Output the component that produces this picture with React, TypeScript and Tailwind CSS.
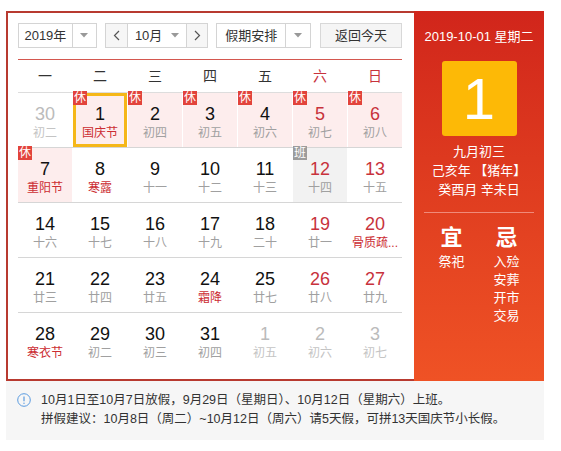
import React from "react";

type Day = {
  n: number;
  l: string;
  other?: boolean;
  red?: boolean;
  fest?: boolean;
  hol?: boolean;
  work?: boolean;
  sel?: boolean;
};

const rows: Day[][] = [
  [
    { n: 30, l: "初二", other: true },
    { n: 1, l: "国庆节", fest: true, hol: true, sel: true },
    { n: 2, l: "初四", hol: true },
    { n: 3, l: "初五", hol: true },
    { n: 4, l: "初六", hol: true },
    { n: 5, l: "初七", hol: true, red: true },
    { n: 6, l: "初八", hol: true, red: true },
  ],
  [
    { n: 7, l: "重阳节", fest: true, hol: true },
    { n: 8, l: "寒露", fest: true },
    { n: 9, l: "十一" },
    { n: 10, l: "十二" },
    { n: 11, l: "十三" },
    { n: 12, l: "十四", red: true, work: true },
    { n: 13, l: "十五", red: true },
  ],
  [
    { n: 14, l: "十六" },
    { n: 15, l: "十七" },
    { n: 16, l: "十八" },
    { n: 17, l: "十九" },
    { n: 18, l: "二十" },
    { n: 19, l: "廿一", red: true },
    { n: 20, l: "骨质疏...", red: true, fest: true },
  ],
  [
    { n: 21, l: "廿三" },
    { n: 22, l: "廿四" },
    { n: 23, l: "廿五" },
    { n: 24, l: "霜降", fest: true },
    { n: 25, l: "廿七" },
    { n: 26, l: "廿八", red: true },
    { n: 27, l: "廿九", red: true },
  ],
  [
    { n: 28, l: "寒衣节", fest: true },
    { n: 29, l: "初二" },
    { n: 30, l: "初三" },
    { n: 31, l: "初四" },
    { n: 1, l: "初五", other: true },
    { n: 2, l: "初六", other: true },
    { n: 3, l: "初七", other: true },
  ],
];

const weekdays = ["一", "二", "三", "四", "五", "六", "日"];

function Arrow() {
  return (
    <svg width="8" height="5" viewBox="0 0 8 5" className="block">
      <path d="M0 0 L8 0 L4 4.5 Z" fill="#999" />
    </svg>
  );
}

function Cell({ d }: { d: Day }) {
  const bg = d.hol ? "bg-[#fdeded]" : d.work ? "bg-[#f2f2f2]" : "bg-white";
  const numColor = d.other
    ? "text-[#bbbbbb]"
    : d.red
    ? "text-[#c8323c]"
    : "text-[#111111]";
  const lunColor = d.other
    ? "text-[#c4c4c4]"
    : d.fest
    ? "text-[#cc2d33]"
    : "text-[#a0a0a0]";
  return (
    <div className={`relative h-full ${bg}`}>
      <div
        className={`h-full flex flex-col items-center ${
          d.sel ? "border-[3px] border-[#f5b719] pt-[8px]" : "pt-[11px]"
        }`}
      >
        <div
          className={`text-[18px] leading-[20px] ${numColor}`}
          style={{ fontFamily: '"Liberation Sans", Arial, sans-serif' }}
        >
          {d.n}
        </div>
        <div className={`text-[12px] leading-[18px] whitespace-nowrap ${lunColor}`}>
          {d.l}
        </div>
      </div>
      {d.hol && (
        <div className="absolute left-0 top-[-2px] w-[14px] h-[14px] bg-[#e2433b] text-white text-[12px] leading-[14px] text-center">
          休
        </div>
      )}
      {d.work && (
        <div className="absolute left-0 top-[-2px] w-[14px] h-[14px] bg-[#9c9c9c] text-white text-[12px] leading-[14px] text-center">
          班
        </div>
      )}
    </div>
  );
}

export default function App() {
  return (
    <div
      className="w-[561px] h-[451px] bg-white pt-[11px] pl-[6px] text-[#333]"
      style={{ fontFamily: '"Liberation Sans", "Noto Sans CJK SC", sans-serif' }}
    >
      <div className="flex w-[538px] h-[370px]">
        {/* left calendar */}
        <div className="w-[408px] h-full border-l-2 border-t-2 border-b-2 border-[#b83a30] pl-[10px] pr-[12px] pt-[10px]">
          {/* controls */}
          <div className="flex items-center h-[25px] text-[13px] text-[#333]">
            <div className="flex h-[25px] w-[79px] border border-[#d4d4d4] bg-white">
              <div className="flex-1 flex items-center justify-center">2019年</div>
              <div className="w-[24px] border-l border-[#d4d4d4] flex items-center justify-center">
                <Arrow />
              </div>
            </div>
            <div className="flex h-[25px] w-[104px] ml-[8px] border border-[#d4d4d4] bg-white">
              <div className="w-[22px] bg-[#f6f6f6] border-r border-[#d4d4d4] flex items-center justify-center">
                <svg width="7" height="11" viewBox="0 0 7 11">
                  <path d="M6 1 L1.5 5.5 L6 10" stroke="#555" strokeWidth="1.2" fill="none" />
                </svg>
              </div>
              <div className="flex-1 flex items-center justify-center gap-[9px]">
                <span>10月</span>
                <Arrow />
              </div>
              <div className="w-[21px] bg-[#f6f6f6] border-l border-[#d4d4d4] flex items-center justify-center">
                <svg width="7" height="11" viewBox="0 0 7 11">
                  <path d="M1 1 L5.5 5.5 L1 10" stroke="#555" strokeWidth="1.2" fill="none" />
                </svg>
              </div>
            </div>
            <div className="flex h-[25px] w-[95px] ml-[8px] border border-[#d4d4d4] bg-white">
              <div className="flex-1 flex items-center justify-center">假期安排</div>
              <div className="w-[25px] border-l border-[#d4d4d4] flex items-center justify-center">
                <Arrow />
              </div>
            </div>
            <div className="flex h-[25px] w-[82px] ml-[9px] border border-[#d8d8d8] bg-[#f5f5f5] items-center justify-center">
              返回今天
            </div>
          </div>
          {/* red line */}
          <div className="mt-[11px] h-px bg-[#d4574f]" />
          {/* weekday header */}
          <div className="grid grid-cols-7 gap-x-px h-[33px] border-b border-[#dddddd] text-[14px] leading-[32px]">
            {weekdays.map((w, i) => (
              <div
                key={w}
                className={`text-center ${i >= 5 ? "text-[#c8323c]" : "text-[#333]"}`}
              >
                {w}
              </div>
            ))}
          </div>
          {/* rows */}
          {rows.map((r, ri) => (
            <div
              key={ri}
              className={`grid grid-cols-7 gap-x-px h-[55px] ${
                ri < rows.length - 1 ? "border-b border-[#d6d6d6]" : ""
              }`}
            >
              {r.map((d, di) => (
                <Cell key={di} d={d} />
              ))}
            </div>
          ))}
        </div>
        {/* right panel */}
        <div className="w-[130px] h-full bg-linear-to-b from-[#d1251b] to-[#ef5225] text-white flex flex-col items-center">
          <div className="mt-[17px] text-[13px] leading-[18px]">2019-10-01 星期二</div>
          <div
            className="mt-[15px] w-[75px] h-[75px] rounded-[3px] bg-[#fdb906] flex items-center justify-center text-[58px] leading-none"
            style={{ fontFamily: '"Liberation Sans", Arial, sans-serif' }}
          >
            1
          </div>
          <div className="mt-[6px] text-[13px] leading-[19px] text-center">
            <div>九月初三</div>
            <div>己亥年 【猪年】</div>
            <div>癸酉月 辛未日</div>
          </div>
          <div className="mt-[13px] w-[110px] h-px bg-[#f08a7a]" />
          <div className="mt-[12px] w-[110px] grid grid-cols-2">
            <div className="flex flex-col items-center">
              <div className="text-[22px] leading-[26px] font-bold">宜</div>
              <div className="mt-[2px] text-[13px] leading-[18px]">祭祀</div>
            </div>
            <div className="flex flex-col items-center">
              <div className="text-[22px] leading-[26px] font-bold">忌</div>
              <div className="mt-[2px] text-[13px] leading-[18px] text-center">
                <div>入殓</div>
                <div>安葬</div>
                <div>开市</div>
                <div>交易</div>
              </div>
            </div>
          </div>
        </div>
      </div>
      {/* note */}
      <div className="w-[538px] h-[59px] bg-[#f6f6f6] flex pt-[10px] pl-[11px] text-[12.5px] leading-[19px] text-[#333]">
        <svg width="14" height="14" viewBox="0 0 14 14" className="mt-[2px] shrink-0">
          <circle cx="7" cy="7" r="6.3" stroke="#5a9be0" strokeWidth="1" fill="none" />
          <path d="M7 3.5 L7 8.3" stroke="#5a9be0" strokeWidth="1.2" />
          <circle cx="7" cy="10.2" r="0.7" fill="#5a9be0" />
        </svg>
        <div className="ml-[10px]">
          <div>10月1日至10月7日放假，9月29日（星期日）、10月12日（星期六）上班。</div>
          <div>拼假建议：10月8日（周二）~10月12日（周六）请5天假，可拼13天国庆节小长假。</div>
        </div>
      </div>
    </div>
  );
}
